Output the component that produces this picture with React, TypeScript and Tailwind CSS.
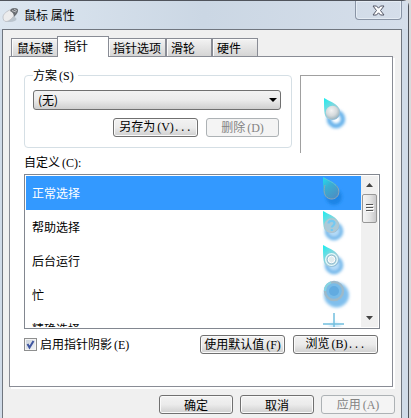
import type { ReactNode } from 'react';
import clsx from 'clsx';

const tabs = ['鼠标键', '指针', '指针选项', '滑轮', '硬件'];

type PointerKind = 'normal' | 'help' | 'work' | 'busy' | 'cross';

const pointers: { name: string; kind: PointerKind }[] = [
    { name: '正常选择', kind: 'normal' },
    { name: '帮助选择', kind: 'help' },
    { name: '后台运行', kind: 'work' },
    { name: '忙', kind: 'busy' },
    { name: '精确选择', kind: 'cross' },
];

function Latin({ children }: { children: ReactNode }) {
    return <span className="ml-0.5 font-['Liberation_Serif',serif]">{children}</span>;
}

function Dots() {
    return <span className="font-['Liberation_Mono',monospace] text-[10px]">...</span>;
}

function Button({ className, disabled, children }: { className?: string; disabled?: boolean; children: ReactNode }) {
    return (
        <button
            type="button"
            disabled={disabled}
            className={clsx(
                'flex h-[19px] items-center justify-center whitespace-nowrap rounded-[3px] border',
                disabled
                    ? 'border-[#adb2b5] bg-[#f4f4f4] text-[#838383]'
                    : 'border-[#707070] bg-linear-to-b from-[#f2f2f2] from-0% via-[#ebebeb] via-50% to-[#cfcfcf] shadow-[inset_0_0_0_1px_#fafafa]',
                className,
            )}
        >
            <span>{children}</span>
        </button>
    );
}

function Defs() {
    return (
        <svg className="absolute size-0" aria-hidden="true">
            <defs>
                <linearGradient id="drop" x1="0" y1="0" x2="0.7" y2="1">
                    <stop offset="0" stopColor="#19eeee" />
                    <stop offset="0.4" stopColor="#6fdbe2" />
                    <stop offset="0.75" stopColor="#a9cbd8" />
                    <stop offset="1" stopColor="#8dbcdc" />
                </linearGradient>
                <linearGradient id="dropDark" x1="0" y1="0" x2="0.6" y2="1">
                    <stop offset="0" stopColor="#1fe0ee" />
                    <stop offset="0.45" stopColor="#3aaed2" />
                    <stop offset="1" stopColor="#4a90c4" />
                </linearGradient>
                <radialGradient id="pearl" cx="0.42" cy="0.35" r="0.65">
                    <stop offset="0" stopColor="#f4f4f4" />
                    <stop offset="0.6" stopColor="#d5dadc" />
                    <stop offset="1" stopColor="#9fb6c0" />
                </radialGradient>
                <filter id="soft" x="-40%" y="-40%" width="180%" height="180%">
                    <feGaussianBlur stdDeviation="1.4" />
                </filter>
            </defs>
        </svg>
    );
}

const dropPath = 'M1 0C6 3 13 5 16 10C18.500 14 17 19 13.500 21C9.500 23.500 3.500 21.500 2 17C1 14 1 5 1 0Z';

function PearlIcon() {
    return (
        <svg width="32" height="36" viewBox="0 0 32 36" aria-hidden="true">
            <circle cx="13" cy="21" r="7" fill="none" stroke="#65b1ea" strokeWidth="4.500" filter="url(#soft)" />
            <path d={dropPath} fill="url(#drop)" />
            <circle cx="9.500" cy="14.500" r="6.800" fill="url(#pearl)" />
        </svg>
    );
}

function PointerIcon({ kind }: { kind: PointerKind }) {
    return (
        <svg width="32" height="32" viewBox="0 0 32 32" className="shrink-0" aria-hidden="true">
            {kind === 'normal' && (
                <>
                    <circle cx="12" cy="20" r="8" fill="#1a84e6" filter="url(#soft)" />
                    <path d={dropPath} fill="url(#dropDark)" />
                    <path d="M3 8C1.500 13 2 18 5 20.500C9 23.500 15 22 16.500 17C17.500 13 16 10 13.500 8" fill="none" stroke="#8ba6b8" />
                    <path d="M2 1C6 3.500 11 5 14 8.500" fill="none" stroke="#5fc0d8" />
                </>
            )}
            {(kind === 'help' || kind === 'work') && (
                <>
                    <circle cx="12" cy="20" r="7.500" fill="#b5dbf7" stroke="#6fb6ea" strokeWidth="3.500" filter="url(#soft)" />
                    <path d={dropPath} fill="url(#drop)" />
                </>
            )}
            {kind === 'help' && (
                <>
                    <circle cx="9.500" cy="14.500" r="6.800" fill="#a9cad9" stroke="#b9c6cc" />
                    <path
                        d="M6.500 12.500C6.500 9 12.500 9 12.500 12.300C12.500 14.500 9.800 14.500 9.800 16.500M9.800 18V20"
                        fill="none"
                        stroke="#74c9f2"
                        strokeWidth="2.200"
                    />
                </>
            )}
            {kind === 'work' && (
                <>
                    <circle cx="9.500" cy="14.500" r="5.800" fill="#9cc4d4" stroke="#e6fafa" strokeWidth="1.300" />
                    <circle cx="9.500" cy="14.500" r="3.300" fill="#e2ecee" stroke="#fff" />
                </>
            )}
            {kind === 'busy' && (
                <>
                    <circle cx="14.500" cy="16" r="12.500" fill="#80bfed" filter="url(#soft)" />
                    <circle cx="12" cy="12" r="9" fill="#78bbe8" stroke="#9db9c9" strokeWidth="2.500" />
                    <circle cx="12" cy="12" r="5" fill="#62abe0" />
                    <path d="M3 12A9 9 0 0 1 9 3.500" fill="none" stroke="#83d4e4" strokeWidth="2" />
                </>
            )}
            {kind === 'cross' && (
                <>
                    <circle cx="13" cy="15" r="6" fill="#d5ecfa" filter="url(#soft)" />
                    <path d="M12 0V24M1 11H22" stroke="#72bede" strokeWidth="1.500" />
                </>
            )}
        </svg>
    );
}

function TitleBar() {
    return (
        <header className="flex h-7 items-start justify-between bg-linear-to-r from-[#dce6f0] via-[#cbd7e4] to-[#d5deea]">
            <div className="flex h-7 items-center gap-1 pl-0.5">
                <svg width="18" height="16" viewBox="0 0 18 16" aria-hidden="true">
                    <ellipse cx="8" cy="12" rx="6.500" ry="3" fill="#9aa3ac" opacity="0.5" />
                    <path d="M1 10C1 7 5 4 9 2.500C13 1.500 15 4 13 7C11 11 7 14.500 4 14.500C2 14.500 1 12.500 1 10Z" fill="#ececed" stroke="#b4b8bd" strokeWidth="0.700" />
                    <path d="M9 2C12 0 17 1 16 4C15.500 6.500 14 8 12 10C12 7 10.500 5 8 4Z" fill="#6a6e73" />
                    <path d="M10 3.500L14 5M12 2L15 4" stroke="#d5d7d9" strokeWidth="0.800" />
                </svg>
                <h1 className="whitespace-pre text-black">鼠标 属性</h1>
            </div>
            <button
                type="button"
                aria-label="关闭"
                className="mr-1.5 flex h-[19px] w-[47px] items-center justify-center rounded-b-[4px] border border-t-0 border-[#8994a5] shadow-[inset_0_0_0_1px_#e5ecf4]"
            >
                <svg width="13" height="11" viewBox="0 0 13 11" aria-hidden="true">
                    <path
                        d="M1 1H4.500L6.500 3.200L8.500 1H12L8.500 5.500L12 10H8.500L6.500 7.800L4.500 10H1L4.500 5.500Z"
                        fill="#fff"
                        stroke="#535666"
                        strokeLinejoin="round"
                    />
                </svg>
            </button>
        </header>
    );
}

function Scrollbar() {
    return (
        <div className="flex w-[17px] shrink-0 flex-col bg-[#f0f0f0]">
            <button type="button" aria-label="向上滚动" className="flex h-[18px] items-center justify-center">
                <svg width="7" height="4" viewBox="0 0 7 4" aria-hidden="true">
                    <path d="M0 4L3.500 0L7 4Z" fill="#444" />
                </svg>
            </button>
            <div className="mx-px flex h-[29px] items-center justify-center rounded-[2px] border border-[#979797] bg-linear-to-r from-[#f5f5f5] via-[#e6e6e6] to-[#c9c9cb]">
                <svg width="8" height="9" viewBox="0 0 8 9" aria-hidden="true">
                    <path d="M0 .5H7M0 3.500H7M0 6.500H7" stroke="#555" />
                    <path d="M1 1.500H8M1 4.500H8M1 7.500H8" stroke="#fff" />
                </svg>
            </div>
            <button type="button" aria-label="向下滚动" className="mt-auto flex h-[18px] items-center justify-center">
                <svg width="7" height="4" viewBox="0 0 7 4" aria-hidden="true">
                    <path d="M0 0L3.500 4L7 0Z" fill="#444" />
                </svg>
            </button>
        </div>
    );
}

export default function App() {
    return (
        <div className="min-h-screen overflow-hidden bg-[#d9dadc] pr-0.5 font-['Noto_Sans_CJK_SC',sans-serif] text-[12px] leading-4 text-black">
            <Defs />
            <div className="flex min-h-screen flex-col rounded-tr-[6px] border-t border-r border-[#50545c] bg-[#d0dbe8]">
                <TitleBar />
                <main className="ml-0.5 mr-1.5 flex-1 border border-b-0 border-[#70767f] bg-[#f0f0f0] pt-1.5">
                    <div role="tablist" className="flex h-5 items-end pl-2">
                        {tabs.map((tab) => (
                            <button
                                key={tab}
                                type="button"
                                role="tab"
                                aria-selected={tab === '指针'}
                                className={clsx(
                                    'whitespace-nowrap border border-b-0 border-[#898c95]',
                                    tab === '指针'
                                        ? 'relative -mx-px -mb-px h-[21px] bg-white pl-1.5 pr-5 pb-0.5'
                                        : 'h-[18px] bg-linear-to-b from-[#f3f3f3] to-[#d5d5d5] shadow-[inset_1px_1px_0_#fbfbfb]',
                                    tab === '鼠标键' && 'pl-[5px] pr-1',
                                    tab === '指针选项' && 'px-1',
                                    (tab === '滑轮' || tab === '硬件') && 'pl-1 pr-4',
                                )}
                            >
                                {tab}
                            </button>
                        ))}
                    </div>

                    <section className="ml-1.5 mr-2 border border-[#898c95] bg-white pt-2.5 pr-3 pb-8 pl-3.5 shadow-[2px_2px_0_#fff]">
                        <div className="flex items-start gap-2">
                            <fieldset className="min-w-0 flex-1 rounded-[4px] border border-[#d5dfe5] pr-2.5 pb-2.5 pl-2">
                                <legend className="pl-0 pr-1">
                                    <label htmlFor="scheme">
                                        方案<Latin>(S)</Latin>
                                    </label>
                                </legend>
                                <div className="relative mt-1.5">
                                    <select
                                        id="scheme"
                                        className="block h-5 w-full appearance-none rounded-[3px] border border-[#707070] bg-linear-to-b from-[#f2f2f2] via-[#ebebeb] to-[#cfcfcf] pl-1 leading-4"
                                    >
                                        <option>(无)</option>
                                    </select>
                                    <svg width="8" height="4" viewBox="0 0 8 4" className="pointer-events-none absolute right-1 top-2" aria-hidden="true">
                                        <path d="M0 0H8L4 4Z" fill="#000" />
                                    </svg>
                                </div>
                                <div className="mt-2 flex justify-end gap-2 pr-0.5">
                                    <Button className="w-[85px]">
                                        另存为<Latin>(V)</Latin>
                                        <Dots />
                                    </Button>
                                    <Button disabled className="w-[73px]">
                                        删除<Latin>(D)</Latin>
                                    </Button>
                                </div>
                            </fieldset>
                            <div className="mt-2 h-[78px] w-20 border-t border-l border-[#a0a0a0] pt-[22px] pl-[22px]">
                                <PearlIcon />
                            </div>
                        </div>

                        <h2 id="custom" className="mt-px">
                            自定义<Latin>(C):</Latin>
                        </h2>
                        <div className="mt-[3px] flex h-[155px] border border-[#828790] p-px">
                            <ul role="listbox" aria-labelledby="custom" className="min-w-0 flex-1 overflow-hidden">
                                {pointers.map((p, i) => (
                                    <li
                                        key={p.name}
                                        role="option"
                                        aria-selected={i === 0}
                                        className={clsx(
                                            'flex h-[34px] items-center justify-between pl-1.5 pr-[7px]',
                                            i === 0 && 'bg-[#3399ff] text-white',
                                        )}
                                    >
                                        {p.name}
                                        <PointerIcon kind={p.kind} />
                                    </li>
                                ))}
                            </ul>
                            <Scrollbar />
                        </div>

                        <div className="mt-1.5 flex items-center gap-2">
                            <label className="mr-auto flex items-center gap-[3px] whitespace-nowrap">
                                <span className="relative flex">
                                    <input
                                        type="checkbox"
                                        defaultChecked
                                        className="peer size-[13px] appearance-none border border-[#8e8f8f] bg-linear-to-br from-[#c9d0d8] to-[#f4f6f8] shadow-[inset_0_0_0_1px_#f4f4f4]"
                                    />
                                    <svg
                                        width="13"
                                        height="13"
                                        viewBox="0 0 13 13"
                                        className="pointer-events-none absolute inset-0 hidden peer-checked:block"
                                        aria-hidden="true"
                                    >
                                        <path d="M3.500 6L5.500 9.500L9.500 3" fill="none" stroke="#3f56a0" strokeWidth="2" />
                                    </svg>
                                </span>
                                <span>
                                    启用指针阴影<Latin>(E)</Latin>
                                </span>
                            </label>
                            <Button className="w-[85px]">
                                使用默认值<Latin>(F)</Latin>
                            </Button>
                            <Button className="mr-0.5 w-[85px]">
                                浏览<Latin>(B)</Latin>
                                <Dots />
                            </Button>
                        </div>
                    </section>

                    <footer className="mt-2 flex justify-end gap-[7px] pr-1.5 pb-2">
                        <Button className="w-[74px]">确定</Button>
                        <Button className="w-[74px]">取消</Button>
                        <Button disabled className="w-[74px]">
                            应用<Latin>(A)</Latin>
                        </Button>
                    </footer>
                </main>
            </div>
        </div>
    );
}
